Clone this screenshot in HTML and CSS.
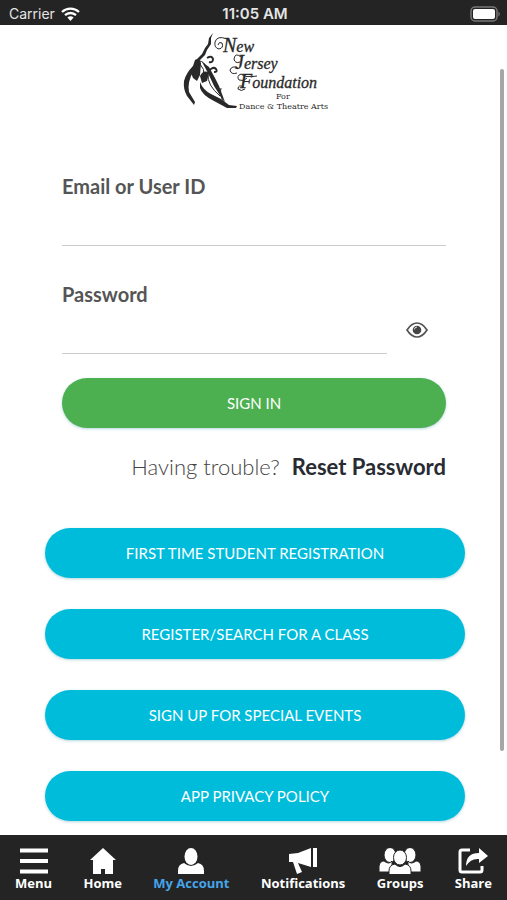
FILE: index.html
```html
<!DOCTYPE html>
<html lang="en">
  <head>
    <meta charset="utf-8" />
    <title>My Account</title>
    <meta name="viewport" content="width=device-width, initial-scale=1" />
    <link rel="stylesheet" href="styles.css">
  </head>
  <body>
    <header class="status-bar">
      <div class="carrier">
        <span>Carrier</span>
        <svg width="19" height="14" viewBox="0 0 19 14" aria-hidden="true">
          <path d="M1 5a12.500 12.500 0 0 1 17 0M4 8.200a8 8 0 0 1 11 0" fill="none" stroke="#fff" stroke-width="2.300" />
          <path d="M6.400 10.600a4.500 4.500 0 0 1 6.200 0L9.500 14z" fill="#fff" />
        </svg>
      </div>
      <div class="clock">11:05 AM</div>
      <div class="battery">
        <svg width="31" height="16" viewBox="0 0 31 16" aria-hidden="true">
          <rect x="1" y="1" width="26" height="14" rx="4" fill="none" stroke="#777" stroke-width="1.500" />
          <rect x="3" y="3" width="22" height="10" rx="2" fill="#fff" />
          <path d="M28.500 5.500q2.500 2.500 0 5z" fill="#888" />
        </svg>
      </div>
    </header>

    <main class="content">
      <svg class="logo" width="160" height="85" viewBox="0 0 160 85" role="img" aria-label="New Jersey Foundation For Dance &amp; Theatre Arts">
        <!-- dancer -->
        <g fill="#292929">
          <path d="M38 0L36 5 36 11 32 17 30 22 24 28 22 26 27 21 30 15 33 11 34 5z" />
          <path d="M20 27Q24 24 26 30L25 42 22 48 18 45 16 40 18 33z" />
          <path d="M18 33Q11 40 9 48 8 56 12 63L19 72 20 69 14 59Q12 49 19 37z" />
          <path d="M27 29L34 34 40 45 44 53 50 69 46 64 39 53 33 40z" />
          <path d="M25 43Q29 36 34 40L32 48 27 50z" />
          <path d="M25 49Q28 57 36 61L46 66 54 72 62 73 61 75 52 75 39 68Q27 62 25 55z" />
        </g>
        <g fill="none" stroke="#292929" stroke-width="1">
          <path d="M24 28Q29 28 31 34" />
          <path d="M25 31Q30 36 29 43M33 41Q32 52 45 63M46 55Q44 63 49 69" />
        </g>
        <g fill="none" stroke="#292929" stroke-width="2">
          <path d="M32 25Q37 22 38 26 38 30 34 29" />
          <path d="M34 38Q38 33 41 36 43 39 39 39" />
        </g>
        <!-- swashes round the capitals -->
        <g fill="none" stroke="#292929" stroke-width="1">
          <path d="M52 6Q42 2 40 9 39 15 44 16 49 15 47 10 44 8 43 12" />
          <path d="M66 24Q60 19 59 26 60 31 65 29M63 35Q57 32 55 37 56 42 62 40" />
          <path d="M82 43Q70 45 66 41 61 43 64 47 69 49 72 45M69 54Q63 51 63 56 66 59 70 56" />
        </g>
        <g class="logo-script">
          <text x="48" y="19"><tspan class="cap">N</tspan>ew</text>
          <text x="60" y="36"><tspan class="cap">J</tspan>ersey</text>
          <text x="65" y="55"><tspan class="cap">F</tspan>oundation</text>
        </g>
        <g class="logo-serif">
          <text x="101" y="66">For</text>
          <text x="64" y="76">Dance &amp; Theatre Arts</text>
        </g>
      </svg>

      <form class="login-form" action="#">
        <div class="field">
          <label for="userId">Email or User ID</label>
          <input type="text" id="userId" name="userId" />
        </div>
        <div class="field">
          <label for="password">Password</label>
          <div class="password-row">
            <input type="password" id="password" name="password" />
            <button type="button" class="show-btn" aria-label="Show password" onclick="togglePassword()">
              <svg width="24" height="18" viewBox="0 0 24 18" aria-hidden="true">
                <path d="M2 9Q6.500 2 12 2T22 9Q17.500 16 12 16T2 9z" fill="none" stroke="#555" stroke-width="1.700" />
                <circle cx="12" cy="9" r="4.300" fill="#444" />
                <path d="M9.500 8.500Q9.500 6 12 6" fill="none" stroke="#ddd" />
              </svg>
            </button>
          </div>
        </div>
        <button type="submit" class="btn btn-green">SIGN IN</button>
        <p class="trouble"><span>Having trouble?</span> <a href="#">Reset Password</a></p>
      </form>

      <div class="links">
        <button type="button" class="btn">FIRST TIME STUDENT REGISTRATION</button>
        <button type="button" class="btn">REGISTER/SEARCH FOR A CLASS</button>
        <button type="button" class="btn">SIGN UP FOR SPECIAL EVENTS</button>
        <button type="button" class="btn">APP PRIVACY POLICY</button>
      </div>
      <div class="scroll-thumb"></div>
    </main>

    <nav class="tab-bar">
      <a href="#">
        <svg width="30" height="26" viewBox="0 0 30 26" aria-hidden="true">
          <path d="M1 2.500h28M1 13h28M1 23.500h28" stroke="#fff" stroke-width="4" />
        </svg>
        Menu
      </a>
      <a href="#">
        <svg width="26" height="26" viewBox="0 0 26 26" aria-hidden="true">
          <path d="M13 0L26 12H23V26H15V21H11V26H3V12H0z" fill="#fff" />
        </svg>
        Home
      </a>
      <a href="#" class="active">
        <svg width="26" height="26" viewBox="0 0 26 26" aria-hidden="true">
          <ellipse cx="13" cy="8.500" rx="6.500" ry="8.500" fill="#fff" />
          <path d="M0 26V23Q0 16 6 15Q13 21 20 15Q26 16 26 23V26z" fill="#fff" />
        </svg>
        My Account
      </a>
      <a href="#">
        <svg width="28" height="26" viewBox="0 0 28 26" aria-hidden="true">
          <path d="M0 6L9 5 22 0V19L9 15 13 24 8 26 4 14H0zM24 0h4v19h-4z" fill="#fff" />
        </svg>
        Notifications
      </a>
      <a href="#">
        <svg width="42" height="26" viewBox="0 0 42 26" aria-hidden="true">
          <g fill="#fff" stroke="#242424" stroke-width="1">
            <ellipse cx="11" cy="7" rx="6" ry="7.500" />
            <ellipse cx="31" cy="7" rx="6" ry="7.500" />
            <path d="M0 24V18Q1 13 5 13Q10 17 13 13V24zM42 24V18Q41 13 37 13Q32 17 29 13V24z" />
            <ellipse cx="21" cy="9.500" rx="6.500" ry="7.500" />
            <path d="M10 27V23Q10 17 16 16Q21 21 26 16Q32 17 32 23V27z" />
          </g>
        </svg>
        Groups
      </a>
      <a href="#">
        <svg width="30" height="26" viewBox="0 0 30 26" aria-hidden="true">
          <path d="M12 2H4Q2 2 2 4V22Q2 24 4 24H22Q24 24 24 22V18" fill="none" stroke="#fff" stroke-width="3" />
          <path d="M8 18Q8 5 21 5V0L30 8 21 15V11Q13 10 8 18z" fill="#fff" />
        </svg>
        Share
      </a>
    </nav>

    <script>
      function togglePassword() {
        var input = document.getElementById("password");
        input.type = input.type == "password" ? "text" : "password";
      }
    </script>
  </body>
</html>
```

FILE: styles.css
```css
* {
  box-sizing: border-box;
}

body {
  margin: 0;
  height: 100vh;
  display: flex;
  flex-direction: column;
  font-family: Lato, sans-serif;
  background-color: #fff;
}

svg {
  display: block;
}

/* Status bar */
.status-bar {
  display: grid;
  grid-template-columns: 1fr auto 1fr;
  align-items: center;
  height: 25px;
  flex: none;
  padding: 2px 6px 0 9px;
  background-color: #242424;
  color: #e4e4e4;
  font: 14px Inter, sans-serif;
}

.carrier {
  display: flex;
  align-items: center;
  gap: 6px;
}

.clock {
  font-size: 15px;
  font-weight: 600;
}

.battery {
  justify-self: end;
}

/* Page */
.content {
  position: relative;
  flex: 1;
  min-height: 0;
  overflow: hidden;
  padding: 8px 42px 0 45px;
}

.logo {
  margin: 0 auto;
}

.logo-script {
  font: italic 16px "Liberation Serif", serif;
  fill: #292929;
  stroke: #292929;
  stroke-width: 0.3px;
}

.logo-script .cap {
  font-size: 20px;
}

.logo-serif {
  font: 8px "DejaVu Serif", serif;
  fill: #292929;
}

.login-form {
  padding: 56px 19px 0 17px;
}

.field {
  margin-bottom: 36px;
}

.field label {
  display: block;
  font-size: 20px;
  line-height: 24px;
  font-weight: bold;
  color: #555;
}

.field input {
  display: block;
  width: 100%;
  height: 48px;
  padding: 12px 0 0;
  border: none;
  border-bottom: 1px solid #ccc;
  border-radius: 0;
  outline: none;
  background: none;
  font: 20px Lato, sans-serif;
}

.password-row {
  display: flex;
  gap: 18px;
}

.password-row input {
  flex: 1;
  min-width: 0;
}

.show-btn {
  flex: none;
  display: flex;
  align-items: center;
  width: 41px;
  height: 48px;
  padding: 0;
  border: none;
  background: none;
  cursor: pointer;
}

.btn {
  display: block;
  width: 100%;
  height: 50px;
  border: none;
  border-radius: 25px;
  background-color: #00bcdb;
  box-shadow: 0 1px 3px rgba(0, 120, 140, 0.3);
  color: #fff;
  font: 15px Lato, sans-serif;
  cursor: pointer;
}

.btn-green {
  margin-top: -12px;
  background-color: #4caf50;
}

.trouble {
  display: flex;
  justify-content: flex-end;
  gap: 12px;
  margin: 25px 0 0;
  font-size: 22px;
  line-height: 28px;
  font-weight: 300;
  color: #444;
}

.trouble a {
  font-weight: bold;
  color: #292b33;
  text-decoration: none;
}

.links {
  display: grid;
  gap: 31px;
  margin-top: 47px;
}

.scroll-thumb {
  position: absolute;
  top: 44px;
  right: 3px;
  bottom: 84px;
  width: 4px;
  border-radius: 2px;
  background-color: #a6a6a6;
}

/* Bottom tabs */
.tab-bar {
  display: flex;
  justify-content: space-between;
  flex: none;
  height: 65px;
  padding: 13px 15px 0;
  background-color: #242424;
}

.tab-bar a {
  display: flex;
  flex-direction: column;
  align-items: center;
  color: #fff;
  font: bold 13px/18px "Open Sans", sans-serif;
  text-decoration: none;
}

.tab-bar .active {
  color: #45a5ea;
}
```
